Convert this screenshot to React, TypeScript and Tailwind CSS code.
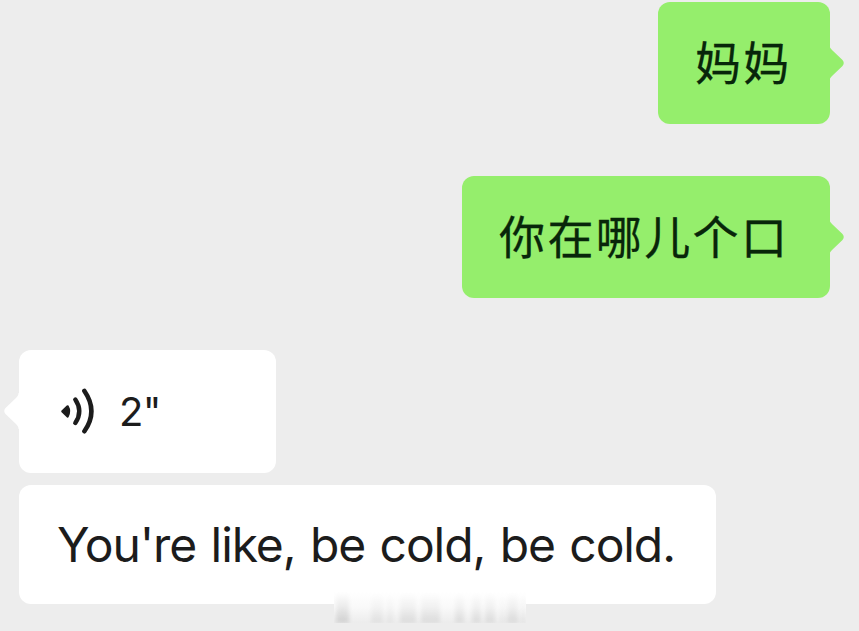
import React from 'react';
import clsx from 'clsx';

type BubbleProps = {
  side: 'left' | 'right';
  tail?: boolean;
  className?: string;
  children: React.ReactNode;
};

function Tail({ side }: { side: 'left' | 'right' }) {
  return (
    <svg
      viewBox="0 0 17 36"
      className={clsx(
        'absolute top-[43px] h-9 w-[17px]',
        side === 'right' ? '-right-[15.5px] text-[#95ee6c]' : '-left-4 -scale-x-100 text-white'
      )}
      fill="currentColor"
    >
      <path d="M0 0 L1.5 0 C1.5 2 2.5 3.5 4 5 L14.5 15 Q17 18 14.5 21 L4 31 C2.5 32.5 1.5 34 1.5 36 L0 36 Z" />
    </svg>
  );
}

function Bubble({ side, tail = true, className, children }: BubbleProps) {
  return (
    <div
      className={clsx(
        'relative flex items-center rounded-[12px]',
        side === 'right' ? 'self-end bg-[#95ee6c] text-[#08260a]' : 'self-start bg-white text-[#1c1c1c]',
        className
      )}
    >
      {tail && <Tail side={side} />}
      {children}
    </div>
  );
}

function VoiceIcon() {
  return (
    <svg viewBox="0 0 36 46" className="h-[46px] w-9 shrink-0" fill="none" stroke="currentColor" strokeLinecap="round">
      <path d="M2.4 23.4 L7.6 18.4 Q10.4 23.4 7.6 28.4 Z" fill="currentColor" stroke="currentColor" strokeWidth="2.4" strokeLinejoin="round" />
      <path d="M15.3 11.5 Q23.3 23.2 15.3 35" strokeWidth="4.4" />
      <path d="M24.4 3 Q38.4 23.2 24.4 43.2" strokeWidth="4.6" />
    </svg>
  );
}

// Faded strokes of the watermark, in px from its left edge
const smudges = [
  { x: 2, w: 13, o: 0.12 },
  { x: 37, w: 12, o: 0.05 },
  { x: 53, w: 6, o: 0.04 },
  { x: 66, w: 16, o: 0.07 },
  { x: 87, w: 19, o: 0.07 },
  { x: 121, w: 9, o: 0.07 },
  { x: 138, w: 9, o: 0.07 },
  { x: 151, w: 10, o: 0.07 },
  { x: 166, w: 5, o: 0.03 },
  { x: 173, w: 11, o: 0.08 },
  { x: 187, w: 4, o: 0.05 },
];

function Watermark() {
  return (
    <div className="absolute top-[107px] left-[315px] h-[31px] w-[192px] overflow-hidden bg-linear-to-b from-white via-[#f9f9f9] to-[#ececec]">
      {smudges.map((s) => (
        <span
          key={s.x}
          className="absolute inset-y-0 bg-linear-to-b from-transparent to-black blur-[2px]"
          style={{ left: s.x, width: s.w, opacity: s.o }}
        />
      ))}
    </div>
  );
}

export default function App() {
  return (
    <main className="flex h-[631px] w-[859px] flex-col overflow-hidden bg-[#ededed] pt-[1.5px] pr-[29.5px] pl-[19px] font-['Inter','Noto_Sans_CJK_SC',sans-serif]">
      <Bubble side="right" className="h-[122.5px] w-[171.5px] pl-[37px]">
        <span className="text-[46px] leading-none tracking-[2.2px] [-webkit-text-stroke:0.3px]">妈妈</span>
      </Bubble>
      <Bubble side="right" className="mt-[52px] h-[122px] w-[367.5px] pl-[37px]">
        <span className="text-[46px] leading-none tracking-[2.4px] [-webkit-text-stroke:0.3px]">你在哪儿个口</span>
      </Bubble>
      <Bubble side="left" className="mt-[52px] h-[122.5px] w-[257px] gap-[23px] pl-[41px]">
        <VoiceIcon />
        <span className="pt-0.5 text-[40px] leading-none tracking-[-0.6px]">2"</span>
      </Bubble>
      <Bubble side="left" tail={false} className="mt-[12.5px] h-[119px] w-[697px] pl-[38px]">
        <span className="text-[48px] leading-none tracking-[-1.1px] [word-spacing:2.1px] whitespace-nowrap">
          You're like, be cold, be cold.
        </span>
        <Watermark />
      </Bubble>
    </main>
  );
}
